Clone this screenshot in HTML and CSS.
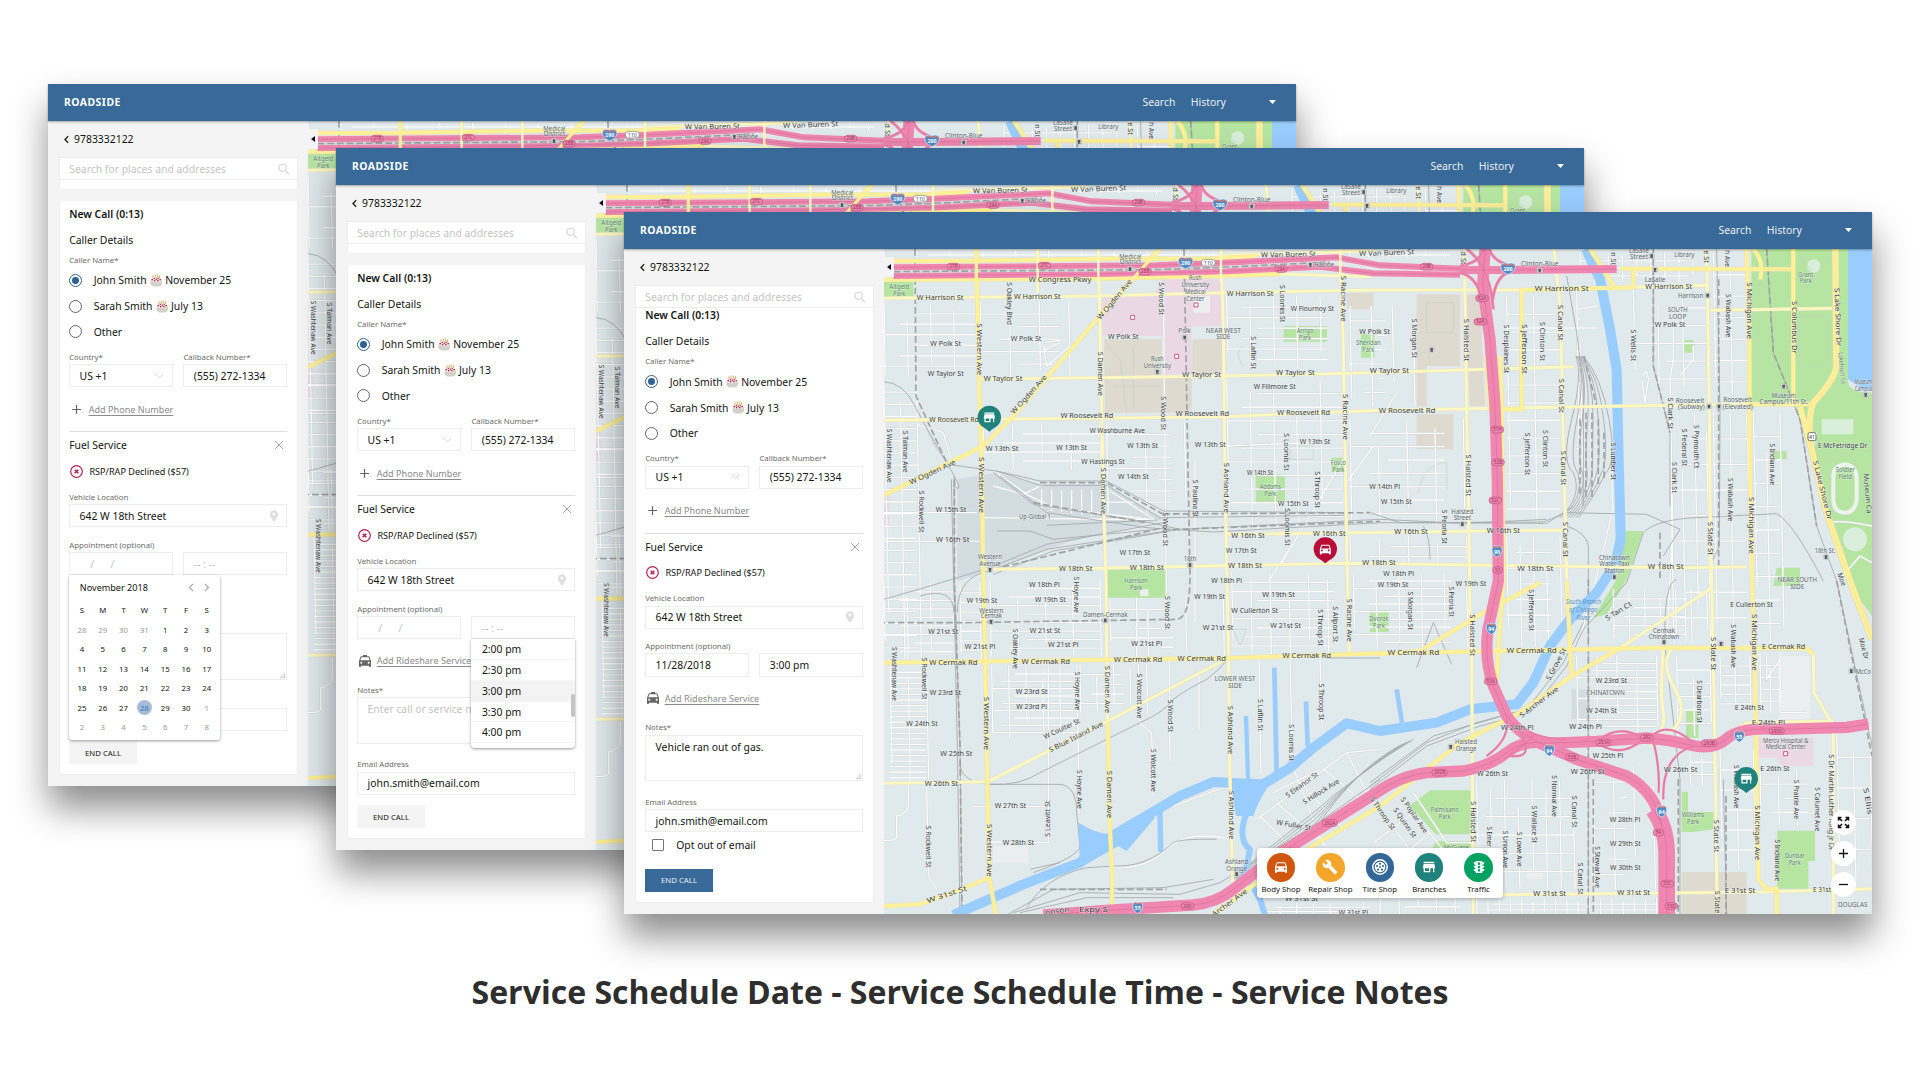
FILE: index.html
```html
<!DOCTYPE html>
<html lang="en">
<head>
<meta charset="utf-8">
<title>Roadside service scheduling</title>
<link rel="stylesheet" href="styles.css">
</head>
<body>
<main class="board">
  <section class="window window-date" data-state="date"></section>
  <section class="window window-time" data-state="time"></section>
  <section class="window window-notes" data-state="notes"></section>
</main>
<h1 class="caption">Service Schedule Date - Service Schedule Time - Service Notes</h1>
<script src="map.js"></script>
<script src="app.js"></script>
</body>
</html>
```
FILE: styles.css
```css
* { box-sizing: border-box; }
html, body { margin: 0; }
body { width: 1920px; height: 1080px; overflow: hidden; position: relative; background: #fff; font-family: "Noto Sans", "Open Sans", sans-serif; font-size: 10.4px; color: #151515; }
svg { display: block; }
.board { position: relative; width: 1920px; height: 960px; }
.window { position: absolute; width: 1248px; height: 702px; display: flex; flex-direction: column; background: #f4f4f4; box-shadow: 1px 22px 34px rgba(0,0,0,.45); }
.window-date { left: 48px; top: 84px; }
.window-time { left: 336px; top: 148px; }
.window-notes { left: 624px; top: 212px; }
.caption { margin: 0; padding-top: 7px; text-align: center; font: 700 32.05px/50px "Open Sans", sans-serif; color: #2e2e2e; }

.topbar { height: 36.5px; flex: none; display: flex; align-items: center; padding: 0 20px 0 16px; background: #396998; color: #fff; box-shadow: 0 1px 2px rgba(0,0,0,.35); position: relative; z-index: 2; }
.brand { font-weight: 700; letter-spacing: .5px; margin-right: auto; }
.topnav { display: flex; align-items: center; gap: 15.5px; color: #e9eff5; }
.topnav svg { margin-left: 27.7px; }
.content { flex: 1; display: flex; min-height: 0; }
.sidebar { width: 260px; padding: 9px 10.4px 0 10.6px; flex: none; display: flex; flex-direction: column; }
.back { display: flex; align-items: center; gap: 5.5px; height: 19px; padding-left: 5px; }
.search { height: 23px; margin-top: 8.5px; flex: none; border: 1px solid #ececec; background: #fff; display: flex; align-items: center; justify-content: space-between; padding: 0 6.5px 0 9.7px; color: #c4c4c4; }
.stub { height: 10px; background: #fff; border: 1px solid #efefef; border-top: 0; margin-bottom: 10.5px; flex: none; }
.card { background: #fff; border: 0 solid #efefef; border-width: 0 1px 1px; padding: 0 9.6px; height: 574.5px; }
.window-notes .card { height: 595px; }
.window-notes .card-title { height: 20px; line-height: 14px; }
.card-title { font-weight: 600; height: 26px; line-height: 27px; }
.section-title { height: 26px; line-height: 26px; display: flex; justify-content: space-between; align-items: center; padding-right: 3px; }
.label { display: block; height: 14.3px; line-height: 14px; font-size: 7.8px; color: #6b6b6b; white-space: nowrap; }
.label-name { height: 15px; }
.radio { display: flex; align-items: center; height: 25.7px; gap: 11.5px; }
.radio .dot { width: 13px; height: 13px; border-radius: 50%; border: 1.3px solid #666; display: grid; place-items: center; }
.radio .dot.on { border-color: #2f6396; }
.radio .dot.on::after { content: ""; width: 6.8px; height: 6.8px; border-radius: 50%; background: #2f6396; }
.radio .who { display: flex; align-items: center; gap: 3px; white-space: pre; }
.pair { display: grid; grid-template-columns: 1fr 1fr; column-gap: 10.6px; }
.pair.gap, .field.gap { margin-top: 5.3px; }
.field.wide { margin-top: 10.4px; }
.field.email { margin-top: 13.6px; }
.input { height: 23.2px; border: 1px solid #ededed; display: flex; align-items: center; justify-content: space-between; padding: 0 8px 0 9.4px; white-space: pre; background: #fff; }
.input .pin { margin-right: -3px; }
.muted { color: #c4c4c4; }
.action { display: flex; align-items: center; height: 43.8px; padding-left: 1px; gap: 5.5px; color: #8b8b8b; font-size: 9.1px; }
.action .taxi { margin: 0 -1.5px; }
.action span { text-decoration: underline; text-underline-offset: 1.5px; }
.rule { height: 1.3px; background: #dedede; }
.declined { display: flex; align-items: center; height: 26px; gap: 6.2px; padding-left: 1px; font-size: 9.1px; }
.notes { height: 46.5px; align-items: flex-start; padding: 4px 1px 1px 9.4px; }
.notes svg { align-self: flex-end; }
.optout { display: flex; align-items: center; gap: 12px; height: 26.2px; padding-left: 7px; }
.optout i { width: 12px; height: 12px; border: 1.3px solid #777; border-radius: 1px; }
.button { display: block; width: 67.5px; height: 22.8px; margin-top: 10.6px; border: 0; padding: 0; background: #f4f4f4; font: 7.8px/22px "Noto Sans", sans-serif; text-align: center; color: #151515; }
.button.primary { background: #396998; color: #e6edf4; }
.anchor { position: relative; }
.calendar { position: absolute; left: 0; top: 23.4px; width: 151px; height: 165px; background: #fff; border-radius: 3px; box-shadow: 0 1px 3px rgba(0,0,0,.4); z-index: 3; }
.cal-head { display: flex; align-items: center; justify-content: space-between; height: 25px; padding: 0 10px 0 10.6px; font-size: 9.1px; }
.cal-head svg { width: 22px; }
.cal-grid { display: grid; grid-template-columns: repeat(7, 20.8px); grid-auto-rows: 19.5px; padding-left: 2.4px; font-size: 7.8px; place-items: center; }
.cal-grid .off { color: #999; }
.cal-grid .picked { width: 15.6px; height: 15.6px; border-radius: 50%; background: #a5bdd8; color: #3279b9; display: grid; place-items: center; }
.times { position: absolute; left: 0; top: 23.4px; width: 104px; height: 109px; background: #fff; border-radius: 0 0 4px 4px; box-shadow: 0 1px 3px rgba(0,0,0,.4); z-index: 3; overflow: hidden; }
.times div { height: 20.8px; line-height: 20px; padding-left: 10.5px; border-bottom: 1px solid #f6f6f6; }
.times .hover { background: #f3f3f3; }
.times i { position: absolute; right: 0; top: 55px; width: 4px; height: 22.5px; border-radius: 2px; background: #c4c4c4; }

.map { flex: 1; position: relative; overflow: hidden; min-width: 0; }
.map > svg { width: 988px; height: 666px; font-family: "Noto Sans", sans-serif; }
.tab { position: absolute; left: 0; top: 8.5px; width: 10px; height: 20px; background: #f4f4f4; display: grid; place-items: center; }
.legend { position: absolute; left: 372.6px; bottom: 15.6px; height: 50.4px; width: 246.4px; background: #fff; border-radius: 4px; box-shadow: 0 1px 4px rgba(0,0,0,.3); display: flex; align-items: stretch; justify-content: center; }
.legend div { width: 49.4px; flex: none; display: flex; flex-direction: column; align-items: center; padding-top: 5px; font-size: 7.8px; line-height: 14px; white-space: nowrap; }
.legend b { width: 28.5px; height: 28.5px; border-radius: 50%; display: grid; place-items: center; }
.legend svg { fill: #fff; }
.body-shop { background: #d1570f; } .repair { background: #f3a62a; } .tire { background: #346798; } .branch { background: #1f827d; } .traffic { background: #04a262; }
.controls { position: absolute; right: 16.4px; bottom: 17px; display: flex; flex-direction: column; gap: 6px; }
.controls b { width: 25px; height: 25px; border-radius: 50%; background: #fff; display: grid; place-items: center; }

.land { fill: #e0e9ec; } .park { fill: #b6e5a2; } .lawn { fill: #d9eedb; } .beige { fill: #dedacf; } .hospital { fill: #ead9e5; } .rail-land { fill: #d3dde1; } .built { fill: #eceff0; }
.water { fill: #99ccff; } .river { fill: none; stroke: #99ccff; stroke-linejoin: round; }
.minor, .pale, .strong, .motor, .lane, .rail, .tie, .path { fill: none; stroke-linejoin: round; }
.minor-case { fill: none; stroke: #d0d6d8; stroke-width: 6.5; }
.minor { stroke: #fdfdfd; stroke-width: 4; }
.pale-case { fill: none; stroke: #dedccb; stroke-width: 11; }
.pale { stroke: #fdf8c0; stroke-width: 9; }
.strong-case { fill: none; stroke: #ebe2ae; stroke-width: 13.5; }
.strong { stroke: #fff199; stroke-width: 11; }
.motor { stroke: #ef87b0; } .lane { stroke: #d8709b; stroke-width: 2; }
.rail-bed { fill: none; stroke: #d6dadb; stroke-width: 8; }
.rail { stroke: #a5a9aa; stroke-width: 2.6; }
.tie { stroke: #9fa3a4; stroke-width: 5; stroke-dasharray: 20 9; }
.path { stroke: #c2d3c4; stroke-width: 2; }
.road-name { font-size: 21px; fill: #3c3f42; } .poi { font-size: 20px; fill: #5c676d; } .green-name { font-size: 20px; fill: #568459; } .water-name { font-size: 19px; fill: #5c93c4; font-style: italic; }
.road-name, .poi, .green-name { paint-order: stroke; stroke: rgba(238,243,244,.7); stroke-width: 2.5px; }
.exit { fill: #ee86ae; stroke: #b95480; stroke-width: 2; } .exit-name { font-size: 14px; fill: #9d315f; }
```
FILE: map.js
```js
// Street map of Chicago's near west side. Units are thirds of a pixel.
// Every road list is a set of SVG path strings grouped by road class.
const roads = {
  strong: [
    'M289 9L297 400 305 640 310 1005 316 1250 322 1605 328 1895 348 2007',
    'M838 9L655 215 400 510 310 600 12 748',
    'M12 1250L1045 1236 1500 1222 2350 1205 2780 1207 2800 1225',
    'M683 1430L690 1750 697 1900 695 1980',
    'M12 1980L120 1975 220 1940 328 1895',
    'M1925 485V132L2260 124V70',
    'M2600 9L2608 300 2610 700 2617 1000 2625 1300 2635 1900 2660 1930 2690 1928V2007',
    'M2740 9V470', 'M2220 68L2740 70', 'M2130 9L2200 118',
    'M1000 2007L1130 1910 1290 1805 1500 1680 1740 1490 1920 1400 2075 1290 2215 1210',
    'M2075 1290L2060 1005', 'M12 45L290 44 700 38 1000 38 1130 30', 'M12 101L650 98 1030 90 1200 84',
    'M1500 1225L1620 1215 1810 1100 1980 1010', 'M2600 475H2800', 'M1820 330L1830 490H1930',
    'M1860 330L1865 500 1870 980 1850 1300', 'M2640 100Q2655 50 2620 9'],
  pale: [
    'M655 9L663 400 672 800 678 1005 683 1430',
    'M1023 9L1030 250 1035 700 1045 1200 1050 1600 1058 1920',
    'M1381 9L1390 300 1400 900 1408 1220', 'M473 9V140',
    'M1753 9L1760 500 1767 850 1770 1100 1775 1240 1780 2007',
    'M2022 9L2042 200 2048 500 2060 1000', 'M2480 9L2488 500 2492 900 2495 1005 2503 1400 2512 2007',
    'M12 523L650 517 1030 512 1500 493 2230 480 2600 475',
    'M12 157L650 150 1030 140 1480 132 1925 132', 'M2260 124L2480 118',
    'M300 400L1030 390 1480 380 2080 362', 'M310 970L680 966 1400 952 2400 965 2600 962',
    'M1035 865L2060 852', 'M322 1608L683 1425 1045 1236', 'M12 1612L322 1607',
    'M1780 1947L2640 1938 2976 1928', 'M2490 193L2870 187', 'M1030 28L1480 14', 'M1200 84L1470 92',
    'M2215 1210L2490 1030', 'M2800 1225L2802 1340 2860 1440V2007', 'M2510 1490L2600 1430 2860 1425',
    'M2350 1210Q2340 1350 2350 1400T2310 1500', 'M2375 1210Q2340 1250 2385 1330T2370 1460']
};

// [left, top, right, bottom, columns, rows] of each residential area
const blocks = [
  [12,170,290,390,4,6],[300,165,655,390,4,5],[12,400,110,1240,2,22],[310,535,660,670,4,4],[680,530,1030,800,3,7],
  [1040,150,1390,370,5,6],[1040,400,1390,850,5,10],[1410,180,1600,480,3,6],[1410,520,1750,840,4,7],[12,1010,220,1240,3,8],
  [30,1260,140,1610,2,20],[240,1010,300,1240,1,7],[330,1000,660,1230,4,8],[690,1060,1030,1230,3,5],[1055,980,1400,1225,6,8],
  [335,1260,590,1480,5,9],[600,1255,800,1400,4,4],[1420,980,1760,1210,5,9],[1410,870,1760,960,4,2],[1880,150,2040,840,2,12],
  [2090,120,2100,800,1,6],[2260,130,2480,450,3,5],[2500,20,2600,470,2,6],[2500,500,2600,1190,2,8],[2370,500,2480,1190,3,8],
  [2620,500,2700,1200,2,9],[1880,870,2040,1200,4,6],[2090,1230,2330,1460,4,10],[2390,1230,2490,1470,2,5],[2520,1230,2610,1400,2,5],
  [1790,1600,2080,1930,7,5],[2140,1560,2320,1930,3,7],[2430,1510,2500,1620,2,2],[2520,1510,2620,1870,2,5],[2640,1570,2860,1740,4,3],
  [1500,1900,1780,2007,5,3],[1790,1955,2330,2007,16,2],[2100,20,2480,110,9,3],[1410,15,1750,35,6,1],[12,15,1000,35,10,1],
  [2640,1220,2700,1400,2,4],[2870,1440,2970,1900,2,4],[700,20,1370,30,5,1],[2200,1030,2480,1190,6,5],[1150,1970,1500,2007,7,2]
];
const extraMinor = [
  'M85 1612V1680Q85 1700 50 1710V1775Q40 1785 12 1783','M140 1612L145 1890 170 1930','M505 1260L505 1790 330 1788','M275 1682H505',
  'M590 1260L598 1700','M775 1255L780 1430 815 1460 820 1650','M868 1240L870 1545','M957 1270V1450','M1137 1240L1143 1585','M1230 1240L1238 1560 1330 1800',
  'M1320 1235L1325 1430','M852 1690L1030 1625 1060 1630 1100 1710','M700 1865Q800 1870 860 1810T1055 1780','M1130 1720L1400 1520 1500 1510','M1140 1710L1290 1860','M1190 1670L1340 1800',
  'M1260 1610L1400 1760','M1330 1570L1440 1660','M1400 1520L1460 1640','M1180 1640L1320 1570','M1500 1690L1640 1880','M1560 1650L1720 1850','M1480 1790L1600 1700','M1540 1850L1650 1760','M1600 1640L1700 1790H1780',
  'M12 800H290','M12 886H300','M110 535L190 560 215 650','M1030 600L1300 590','M1470 570L1550 440','M1400 710L1480 600','M1200 960L1390 640','M1170 1000L1260 860',
  'M490 290L560 280 M490 300L500 360 570 300 M480 280V320L540 290','M430 745L340 720 M430 745L490 715','M315 815L825 822 690 735','M350 680L440 745 520 785 825 822',
  'M485 730V790M515 732V795M545 732V798M575 732V802M605 732V806M635 732V810M850 105L860 1130M945 640V1130M770 1055V1240',
  'M2380 180V340L2370 400 2378 840 2360 1200','M2290 390Q2300 360 2305 400L2295 470 2285 400','M2205 480Q2190 750 2200 780 2150 1010 2090 1210','M2090 190L2150 180','M1870 246H2150',
  'M2800 600L2810 560M2700 1250V1400H2780','M2660 1230V1300L2700 1240','M2440 300V340L2400 390','M2850 830Q2880 820 2976 840','M2880 1000L2940 930 2976 950'
];
const rails = [
  'M12 407Q70 410 105 480T200 650 222 720','M222 690L223 1005 240 1500 246 2007','M214 700L232 1500 240 2007','M200 655L350 675 480 705 680 705 850 795 1400 800','M350 675L480 718 680 718 840 815 1400 808',
  'M340 680L460 775 800 828 900 850 1500 820 1750 832 2000 820','M360 690L500 800 800 845 1000 858 1500 830 2000 832 2080 780','M350 855H450L520 880 830 850','M12 1060L150 1020 330 965 500 895 850 830',
  'M330 975L500 910 860 855','M340 985L520 915 900 850','M500 838L830 822','M222 1100Q220 1020 120 1050','M232 1100Q232 990 330 975','M240 1560Q250 1610 330 1615H540Q590 1620 590 1700L600 1800Q600 1830 460 1880',
  'M330 1615Q420 1620 480 1580L780 1430Q850 1400 880 1360 920 1330 980 1300 1020 1270 1045 1238','M450 1870L540 1850','M380 2007L520 1930 850 1925 1000 1900M400 2000L600 1940 900 1945 1020 1910 1300 1740 1500 1600','M420 2000L620 1955 880 1955M440 1985Q500 1890 620 1865L700 1860Q800 1865 880 1790 900 1778 1010 1780',
  'M1470 1630L1640 1500 1800 1440 1950 1400 2060 1260 2110 1150 2240 1010','M1470 1620L1640 1490 1790 1430 1940 1390 2050 1250 2110 1130','M1470 1610L1660 1470 1900 1400','M1470 800L1560 830 1990 828 2060 800 2300 805 2400 850 2350 930','M2060 90L2090 260 2110 420 2110 780',
  'M2240 1010L2290 860Q2330 820 2450 815L2690 803Q2740 830 2830 1005','M2060 840Q2120 860 2125 900V2007','M2320 9V360L2370 560V780','M2660 9L2680 320 2760 520 2810 840 2870 1005 2976 1500',
  'M2390 1000Q2350 1010 2355 1200L2400 1600V2007','M2510 9L2520 500 2518 900 2490 960','M1630 840Q1650 870 1650 940','M2530 1600L2540 2007','M1340 1236H1500','M1610 1265L1660 1130 1715 1255'
];
for (let i = 0; i < 8; i++) rails.push(`M${2088+i*3} 330Q${2108+i*8} 390 ${2075+i*16} 520T${2080+i*14} 680Q${2110+i*5} 750 ${2040+i*8} 815`);
for (let i = 0; i < 5; i++) rails.push(`M${1600-i*9} ${1480+i*4}Q${1450-i*6} 1570 ${1300+i*3} ${1700+i*10}L${1050+i*6} 1900`);
const ties = ['M105 9L108 450 200 650','M223 700V1005L240 1500 246 2007','M912 9L930 990Q930 1118 890 1120L250 1130H12','M480 710H680L850 805','M850 804L1470 800','M850 852L1500 826','M340 970L860 842','M460 770L800 830','M480 1930H860','M2660 9L2680 320 2760 520 2810 840','M2125 1000V2007','M2140 1600V2007','M2320 9V360L2370 560','M2516 100V960','M2395 1600V2007','M2538 1650V2007','M2870 1005L2976 1530','M2340 860V1005','M2100 520V750','M2118 500V760','M2136 500V760','M2155 520V720','M2172 560V700','M2112 330L2150 480'];
const medianRail = ['M12 77L830 71 1050 63 1350 48'];
const motorways = [
  [18,'M40 64L830 58 1000 52 1370 34 1500 58 1740 68'],[18,'M40 90L650 84 1040 76 1320 62 1480 82 1740 86'],[24,'M1740 72L1830 72 2210 69'],
  [34,'M1815 9L1808 120 1830 280 1845 480 1852 700 1855 1005 1824 1150Q1812 1240 1840 1320L1880 1410Q1920 1470 2010 1505L2090 1540 2240 1590Q2330 1640 2345 1740'],[50,'M2320 1690Q2358 1740 2360 1820V2007'],
  [34,'M490 2007L700 1992 940 1977Q1010 1970 1060 1930L1200 1822 1490 1640Q1560 1590 1640 1580L1750 1575Q1830 1560 1880 1520T2000 1492L2150 1486 2300 1476Q2360 1480 2430 1497T2540 1478 2700 1450L2900 1444 2965 1434'],
  [9,'M1740 60Q1800 50 1812 9M1740 80Q1790 90 1806 160M1900 76Q1850 80 1838 160M1900 60Q1840 50 1828 9M1760 9Q1830 60 1840 190'],
  [7,'M1880 1420Q1890 1480 1820 1530M1900 1430Q1980 1540 1890 1530M1870 1540Q1930 1500 1960 1470M2150 1486Q2220 1430 2290 1478M2150 1490Q2220 1540 2290 1480M2310 1475Q2360 1420 2440 1490M2320 1485Q2340 1560 2336 1640M2440 1500Q2345 1530 2350 1660M1910 1430Q1960 1480 2060 1480']
];
const parks = ['M12 108H100V154H12z','M1211 240H1341V287H1211z','M1443 265H1483V335H1443z','M1127 683H1215V773H1127z','M678 970H858V1055H678z','M1355 635H1397V678H1355z','M1470 1093H1526V1158H1470z',
  'M1650 1633H1772V1765H1668L1588 1680z','M1668 1785H1772V1840H1640z','M2405 1637H2424V1698H2500V1750L2440 1758H2405z','M2692 1754H2805V1845H2785V1928H2692z','M2418 1395H2455V1475H2418z','M2408 282H2441V320H2408z',
  'M2614 9H2904V400Q2900 440 2976 440V1110L2900 1005 2840 820 2750 482 2614 466z','M2238 855H2290L2240 1000 2180 1105 2140 1115 2210 1000z','M2690 965H2760V1020H2680z','M2680 615H2720V640H2680z'];
const rivers = [
  [30,'M2118 9L2160 100 2190 250 2210 370 2215 600 2222 880 2205 955 2150 1040 2070 1120 2010 1200 1960 1310 1910 1375 1770 1390 1670 1430 1500 1455 1400 1432 1300 1505 1230 1565 1150 1615 1070 1612 1000 1608 900 1650 700 1768 600 1850 430 1915 220 2007'],
  [14,'M1183 1265L1190 1590'],[13,'M1098 1410L1104 1600'],[14,'M1278 1366L1283 1500'],[14,'M1550 1330L1566 1430'],[18,'M1100 1700Q1070 1780 1110 1810L1095 1880 1140 1960 1155 2007'],[16,'M840 1690L842 1818']
];
const waters = ['M2904 9H2976V430H2950L2904 400z','M1050 1600L1180 1600Q1140 1650 1120 1710H1068z','M596 1730Q640 1760 690 1765L780 1715H825L740 1815 715 1800 600 1865z'];

// text | x | y | length | rotation
const names = {
 'road-name': `W Van Buren St|1225|25|165|-1;W Van Buren St|1520|20|165|-2;W Congress Pkwy|540|100|188;W Harrison St|180|155|140;W Harrison St|472|150|140;W Harrison St|1110|141|140;W Harrison St|2045|128|162;W Harrison St|2366|122|140;W Flournoy St|1297|187|130
W Polk St|197|291|92;W Polk St|438|278|92;W Polk St|730|272|92;W Polk St|1484|257|92;W Polk St|2370|236|92;W Taylor St|197|382|108;W Taylor St|369|398|116;W Taylor St|965|386|116;W Taylor St|1246|380|116;W Taylor St|1528|374|118
W Fillmore St|1184|421|126;W Roosevelt Rd|222|520|148;W Roosevelt Rd|621|508|158;W Roosevelt Rd|967|503|160;W Roosevelt Rd|1271|498|158;W Roosevelt Rd|1581|492|170;W Washburne Ave|712|554|166
W 13th St|366|606|98;W 13th St|575|603|92;W 13th St|788|599|92;W 13th St|991|594|92;W 13th St|1305|587|92;W Hastings St|669|646|130;W 14th St|760|690|92;W 14th St|1140|680|78;W 14th Pl|1514|720|92;W 15th St|213|791|92;W 15th St|1240|771|92;W 15th St|1549|766|92
W 16th St|218|881|100;W 16th St|1104|867|100;W 16th St|1348|862|98;W 16th St|1593|857|100;W 16th St|1870|852|100;W 17th St|765|918|92;W 17th St|1084|912|92;W 18th St|587|967|100;W 18th St|800|963|102;W 18th St|1095|958|102;W 18th St|1497|950|100;W 18th St|1966|968|108;W 18th St|2357|962|108
W 18th Pl|493|1014|92;W 18th Pl|1040|1003|92;W 18th Pl|1556|982|92;W 19th St|306|1064|92;W 19th St|511|1059|92;W 19th St|989|1051|92;W 19th St|1196|1046|98;W 19th St|1539|1016|92;W 19th St|1773|1011|92;W Cullerton St|1124|1093|140;E Cullerton St|2615|1074|128
W 21st St|190|1155|90;W 21st St|495|1152|92;W 21st St|1014|1143|92;W 21st St|1217|1137|92;W 21st Pl|300|1201|92;W 21st Pl|550|1196|92;W 21st Pl|800|1192|92;W Cermak Rd|220|1250|145;W Cermak Rd|497|1246|145;W Cermak Rd|774|1239|145;W Cermak Rd|965|1236|145;W Cermak Rd|1280|1227|145;W Cermak Rd|1600|1220|155;W Cermak Rd|1955|1213|150;E Cermak Rd|2711|1201|130
W 23rd St|196|1340|94;W 23rd St|455|1335|96;W 23rd Pl|455|1382|92;W 23rd St|2194|1302|94;W 24th St|126|1432|94;W 24th St|2165|1393|92;W 24th Pl|1912|1443|98;W 24th Pl|2117|1440|98;E 24th St|2608|1385|88;E 24th Pl|2665|1429|100;W 25th St|229|1522|96;W 25th Pl|2184|1529|92;W 26th St|184|1612|100;W 26th St|1838|1582|92;W 26th St|2123|1577|102;W 26th St|2402|1571|100;E 26th St|2685|1566|88
W 27th St|391|1678|94;W 28th St|415|1788|94;W 28th Pl|2235|1719|92;W 29th St|2236|1792|92;W 30th St|2236|1865|92;W 31st St|1265|1958|98;W 31st St|2009|1943|98;W 31st St|2261|1940|98;E 31st St|2580|1934|92;E 31st|2826|1930|54;W 31st Pl|1420|1998|88;Expy S|640|1989|86;onson|532|1994|74|-8;W 31st St|200|1945|125|-18
W Ogden Ave|703|160|150|-50;W Ogden Ave|446|445|150|-48;W Ogden Ave|157|678|150|-25;W Coulter St|545|1448|118|-25;S Blue Island Ave|588|1472|180|-27;S Eleanor St|1265|1616|115|-36;S Hillock Ave|1323|1636|125|-32;W Fuller St|1241|1737|105|10;Archer Ave|1048|1970|125|-36;S Archer Ave|1977|1368|140|-37;S Tan Ct|2215|1095|88|-32;S Grove St|2028|1254|105|-62;S Poplar Ave|1603|1707|125|55;S Throop St|1508|1702|115|55;S Quinn St|1575|1730|105|55
S Oakley Blvd|387|173|128|90;S Western Ave|297|310|155|90;S Western Ave|304|717|168|90;S Western Ave|318|1432|160|90;S Western Ave|328|1813|158|90;S Damen Ave|661|383|132|90;S Damen Ave|670|735|140|90;S Damen Ave|683|1330|142|90;S Damen Ave|688|1645|142|90;S Wood St|843|158|98|90;S Wood St|851|502|102|90;S Wood St|857|850|102|90;S Wood St|863|1100|100|90;S Wood St|870|1410|98|90
S Ashland Ave|1038|725|150|90;S Ashland Ave|1050|1452|145|90;S Ashland Ave|1054|1707|146|90;S Paulina St|946|757|112|90;S Loomis St|1208|173|112|90;S Loomis St|1218|618|112|90;S Loomis St|1222|843|112|90;S Loomis St|1235|1490|110|90;S Laflin St|1120|320|98|90;S Laflin St|1142|1407|96|90;S Racine Ave|1390|158|138|90;S Racine Ave|1396|513|138|90;S Racine Ave|1408|1123|130|90;S Throop St|1311|731|110|90;S Throop St|1320|1145|110|90;S Throop St|1325|1368|110|90;S Allport St|1366|1135|108|90
S Washtenaw Ave|28|629|162|90;S Washtenaw Ave|43|1284|162|90;S Talman Ave|76|617|125|90;S Rockwell St|125|797|125|90;S Rockwell St|134|1298|125|90;S Rockwell St|146|1802|125|90;S Oakley Ave|407|1208|120|90;S Hoyne Ave|588|1046|108|90;S Hoyne Ave|593|1335|116|90;S Hoyne Ave|599|1630|116|90;S Wolcott Ave|777|1350|135|90;S Wolcott Ave|820|1573|128|90;S Leavitt St|501|1718|108|-90
S Morgan St|1602|277|118|90;S Morgan St|1591|1094|115|90;S Halsted St|1760|282|128|90;S Halsted St|1764|688|125|90;S Halsted St|1776|1167|125|90;S Halsted St|1780|1727|123|90;S Desplaines St|1878|309|145|90;S Jefferson St|1932|309|148|90;S Jefferson St|1943|624|128|90;S Jefferson St|1953|1092|125|90;S Clinton St|1987|286|118|90;S Clinton St|1996|608|112|90;S Canal St|2041|230|108|90;S Canal St|2045|449|102|90;S Canal St|2050|666|104|90;S Canal St|2056|880|106|90;S Canal St|2083|1697|95|90;S Canal St|2102|1898|95|90
S Lumber St|2201|646|112|90;S Wells St|2260|298|95|90;S Clark St|2371|502|95|90;S Clark St|2382|694|92|90;S Federal St|2414|604|112|90;S Plymouth Ct|2450|602|130|90;S Wabash Ave|2544|209|130|90;S Wabash Ave|2552|761|130|90;S Wabash Ave|2561|1200|130|90;S Wabash Ave|2568|1622|130|90;S Michigan Ave|2607|194|170|90;S Michigan Ave|2615|838|170|90;S Michigan Ave|2622|1189|170|90;S Michigan Ave|2631|1760|165|90;S Indiana Ave|2677|655|125|90;S Indiana Ave|2693|1843|125|90;S State St|2490|877|100|90;S State St|2500|1223|100|90;S State St|2510|1770|98|90;S State|2513|1968|68|90
S Columbus Dr|2742|244|158|90;S Lake Shore Dr|2874|213|175|88;S Lake Shore Dr|2828|732|182|76;S Peoria St|1692|842|102|90;S Peoria St|1714|1067|90|90;S Normal Ave|2024|1650|125|90;S Wallace St|1964|1735|112|90;S Lowe Ave|1919|1810|104|90;S Union Ave|1875|1810|112|90;S Emer|1829|1772|60|90;S Stewart Ave|2153|1863|125|90;S Dearborn St|2459|1367|128|90;S Prairie Ave|2750|1660|118|90;S Calumet Ave|2812|1690|132|90;S Dr Martin Luther King Jr Dr|2854|1670|290|90;S Ellis|2964|1665|80|80;Moe Dr|2952|1208|65|75;Moe|2886|1000|40|70;Museum Ca|2963|742|120|85
E McFetridge Dr|2888|597|148;e St|2479|32|38|90;h Ave|2541|38|50|90;d St|1750|36|40|90;n St|2200|38|38|90`,
 poi: `Medical|751|30|66;District|751|47|64;Racine|1333|56|58;Rush|946|95|38;University|946|116|82;Medical|946|136|62;Center|946|157|54;Polk|914|253|38;NEAR WEST|1030|252|105;SIDE|1030|272|42;Rush|832|336|38;University|832|357|82;18th|930|936|38;Western|330|931|72;Avenue|330|951|64;Up-Global 1|465|812|95;Western|334|1092|72;Cermak|334|1109|64;Damen-Cermak|676|1106|134;LOWER WEST|1065|1298|122;SIDE|1065|1318|42;Ashland|1070|1847|70;Orange|1070|1866|62
Clinton-Blue|1979|52|112;Street|2277|31|54;LaSalle|2277|14|60;Library|2413|26|60;LaSalle|2325|99|62;Harrison|2432|148|76;SOUTH|2393|191|60;LOOP|2393|212|52;Roosevelt|2430|462|86;(Subway)|2434|481|80;Roosevelt|2573|461|86;(Elevated)|2573|480|90;Museum|2711|448|72;Campus/11th St.|2711|467|145;Museum|2950|407|52;Campus|2950|426|52;Halsted|1747|795|66;Street|1747|814|52;Chinatown|2203|934|92;Water Taxi|2203|953|90;Station|2203|972|60;18th St.|2835|914|62;NEAR SOUTH|2752|1001|118;SIDE|2752|1021|42;Cermak|2352|1152|66;Chinatown|2352|1171|92;McCo|2950|1276|46;CHINATOWN|2177|1340|115;Halsted|1758|1487|66;Orange|1758|1507|62;Mercy Hospital &|2717|1482|136;Medical Center|2717|1502|120;DOUGLAS|2918|1974|88`,
 'green-name': `Altgeld|58|122|60;Park|58|142|36;Arrigo|1275|253|50;Park|1275|273|36;Sheridan|1465|290|74;Park|1465|310|36;Fosco|1375|649|46;Park|1375|669|36;Addams|1171|720|64;Park|1171|741|36;Harrison|768|1003|70;Park|768|1023|36;Dvorak|1497|1118|58;Park|1497|1138|36;Palmisano|1694|1690|84;Park|1694|1710|36;McGuane|1729|1804|74;Williams|2439|1704|68;Park|2439|1725|36;Dunbar|2744|1827|60;Park|2744|1848|36;Grant|2777|84|46;Park|2777|104|36;Soldier|2896|669|58;Field|2896|690|40;Lakefront Trl|2886|366|95|85`,
 'water-name': `South Branch|2110|1066|106;of Chicago|2110|1091|86;River|2110|1113|42`
};
const exits = '27B 220 62;27C 493 59;28B 795 77;29A 1203 69;29B 1640 62;52A 1806 157;52A 1801 227;51H 1852 551;52B 1854 649;52C 1846 763;53 1853 972;53A 1832 1306;292A 1349 1731;290 922 1980;292B 1679 1580;293A 2171 1490;292 2300 1475;293B 2488 1491;293D 2690 1455;53B 2076 1533;54 2335 1760;53C 2362 1913;53D 2374 1980';
const shields = '290 917 50;290 1884 67;90 1851 915;94 1834 1147;94 2008 1512;55 2578 1470;94 2345 1695;55 773 1984';
const stations = [[750,69],[1291,56],[914,274],[832,377],[930,957],[330,971],[333,1127],[676,1123],[1070,1884],[1979,73],[2315,30],[2325,71],[2483,148],[2487,481],[2517,481],[2711,421],[1747,834],[2203,993],[2352,1188],[2523,1193],[1712,1502],[2838,933],[2914,1275],[1655,311],[2957,446]];

function blockPaths() {
  const out = [];
  blocks.forEach(([l, t, r, b, c, n], k) => {
    for (let i = 0; i <= c; i++) {
      const x = l + (r - l) * i / c, cut = ((i * 7 + k * 3) % 4) * (b - t) / 12;
      out.push(`M${x} ${t + (i % 2 ? cut : 0)}L${x + (b - t) / 60} ${b - (i % 2 ? 0 : cut)}`);
    }
    for (let j = 1; j <= n; j++) {
      const y = t + (b - t) * j / (n + 1), w = (r - l) / c, a = (j * 5 + k) % 3, z = (j * 3 + k * 2) % 3;
      out.push(`M${l + (c > 2 ? a * w / 1.5 : 0)} ${y + 2}H${r - (c > 2 ? z * w / 1.5 : 0)}`);
    }
  });
  return out;
}

const pinIcon = {
  store: 'M20 4H4v2h16V4zm1 10v-2l-1-5H4l-1 5v2h1v6h10v-6h4v6h2v-6h1zm-9 4H6v-4h6v4z',
  car: 'M18.92 6.01C18.72 5.42 18.16 5 17.5 5h-11c-.66 0-1.21.42-1.42 1.01L3 12v8c0 .55.45 1 1 1h1c.55 0 1-.45 1-1v-1h12v1c0 .55.45 1 1 1h1c.55 0 1-.45 1-1v-8l-2.08-5.99zM6.5 16c-.83 0-1.5-.67-1.5-1.5S5.67 13 6.5 13s1.5.67 1.5 1.5S7.33 16 6.5 16zm11 0c-.83 0-1.5-.67-1.5-1.5s.67-1.5 1.5-1.5 1.5.67 1.5 1.5-.67 1.5-1.5 1.5zM5 11l1.5-4.5h11L19 11H5z'
};
function pin(x, y, color, icon) {
  return `<path fill="${color}" d="M${x - 20} ${y + 27}L${x} ${y + 43}L${x + 20} ${y + 27}z"/><circle cx="${x}" cy="${y}" r="35" fill="${color}"/><path fill="#fff" transform="translate(${x - 22} ${y - 22}) scale(1.83)" d="${pinIcon[icon]}"/>`;
}

// edgeOnly keeps just the labels along the top and left edges, for windows lying behind others
function drawMap(edgeOnly) {
  const paths = (list, cls) => `<path class="${cls}" d="${list.join('')}"/>`;
  const minor = blockPaths().concat(extraMinor);
  let s = '<svg viewBox="12 9 2964 1998" preserveAspectRatio="none"><path class="land" d="M0 0H3000V2100H0z"/>';
  s += '<path class="hospital" d="M667 150H820L850 100H1030V240H935V385H850V270H667zM12 745H28V840H12zM2636 1475H2800V1560H2705L2690 1535H2636z"/>';
  s += '<path class="beige" d="M672 280H845V390H935V500H675zM937 280H1030V385H937zM1610 145H1740V360H1640V480H1610zM1755 145H1800L1815 480H1770zM1610 505H1720V610H1610zM2405 1878H2600V2007H2405zM1400 140H1480V190H1400z"/>';
  s += '<path class="rail-land" d="M232 700L350 680 470 715 680 715 850 820 560 890 330 975 232 1005zM130 530L200 650 160 600zM2075 1330H2130V1420H2075z"/>';
  s += paths(parks, 'park');
  s += '<circle class="lawn" cx="2801" cy="60" r="20"/><path class="lawn" d="M2825 520H2920V565H2825z"/><circle class="lawn" cx="2925" cy="880" r="36"/>';
  s += '<path class="built" d="M340 1800H445V1850H340zM940 150H990V200H940zM2695 1230H2790V1420H2695zM1940 1870H1990V1900H1940zM780 1030H805V1050H780z"/>';
  s += '<path class="path" d="M680 300L720 340 740 500M700 420H840M760 300V490M2640 30V440M2680 200V440H2720M2760 210H2840V360H2760zM2760 30L2850 150M2850 30L2760 150M1140 700Q1170 680 1200 700V750Q1170 780 1140 750zM1090 300Q1060 320 1090 360M1640 170H1720V260H1640zM1610 330Q1650 300 1650 350M1615 740Q1630 650 1700 650V730M2850 620Q2930 600 2930 700V790Q2890 830 2850 780zM1230 600H1300V640H1230zM1080 1200L1060 1150 1100 1150z"/>';
  s += '<path fill="none" stroke="#edf3ee" stroke-width="12" d="M2860 690Q2860 660 2896 655 2930 660 2930 700V760Q2925 800 2896 800 2860 800 2860 760z"/>';
  s += paths(minor, 'minor-case') + paths(minor, 'minor') + paths(rails, 'rail') + paths(ties, 'tie');
  s += rivers.map(r => `<path class="river" stroke-width="${r[0]}" d="${r[1]}"/>`).join('') + paths(waters, 'water');
  s += paths(roads.pale, 'pale-case') + paths(roads.pale, 'pale') + paths(roads.strong, 'strong-case') + paths(roads.strong, 'strong');
  const drive = 'M2866 9L2869 360Q2865 400 2800 470 2785 500 2790 590L2840 800 2910 1005 2976 1180';
  s += `<path fill="none" stroke="#e3dcb4" stroke-width="21" d="${drive}"/><path fill="none" stroke="#fff199" stroke-width="17" d="${drive}M2760 482L2790 590"/><path fill="none" stroke="#e9dc92" stroke-width="1.5" d="${drive}M2640 70H2740"/>`;
  s += motorways.map(m => `<path class="motor" stroke-width="${m[0]}" d="${m[1]}"/>`).join('') + motorways.map(m => `<path class="lane" d="${m[1]}"/>`).join('');
  s += paths(medianRail, 'rail-bed') + paths(medianRail, 'tie');
  s += '<path fill="none" stroke="#fdf8c0" stroke-width="7" d="M473 9V95M655 9V110M1023 9V110M1381 9V110"/><path fill="none" stroke="#fff199" stroke-width="10" d="M289 9V120M838 9L740 120"/>';
  stations.filter(p => !edgeOnly || p[1] < 110).forEach(([x, y]) => { s += `<rect x="${x-8}" y="${y-8}" width="16" height="16" rx="3" fill="#d5d8da" stroke="#a8adb0"/><path fill="#55595c" d="M${x-4} ${y-5}h8v7h-8zM${x-5} ${y+6}l3-4h4l3 4z"/>`; });
  s += '<path fill="#fff" stroke="#c4578a" stroke-width="3" d="M942 171h12v12h-12zM752 208h12v12h-12zM884 325h12v12h-12zM2711 1517h12v12h-12z"/>';
  exits.split(';').forEach(e => { const [t, x, y] = e.split(' '); if (edgeOnly && y > 110) return; s += `<rect class="exit" x="${x - 7 - t.length * 4}" y="${y - 10}" width="${14 + t.length * 8}" height="20" rx="10"/><text class="exit-name" text-anchor="middle" x="${x}" y="${+y + 5}">${t}</text>`; });
  shields.split(';').forEach(e => { const [t, x, y] = e.split(' '); if (edgeOnly && y > 110) return; const w = t.length > 2 ? 21 : 14; s += `<path transform="translate(${x} ${y})" fill="#4f8cc9" stroke="#eef3f7" stroke-width="2" d="M${-w} -12Q${-w/2} -19 0 -14 ${w/2} -19 ${w} -12 ${w + 6} 8 0 19 ${-w - 6} 8 ${-w} -12z"/><path stroke="#cf7d78" stroke-width="4" d="M${x - w + 3} ${y - 11}h${2 * w - 6}"/><text font-size="16" font-weight="700" fill="#fff" text-anchor="middle" x="${x}" y="${+y + 8}">${t}</text>`; });
  s += '<rect x="964" y="40" width="42" height="20" rx="10" fill="#fff" stroke="#777" stroke-width="2"/><text font-size="15" fill="#444" text-anchor="middle" x="985" y="56">110</text>';
  if (!edgeOnly) s += '<rect x="2784" y="560" width="24" height="24" rx="5" fill="#fff" stroke="#555" stroke-width="2.5"/><text font-size="16" fill="#333" text-anchor="middle" x="2796" y="578">41</text>';
  for (const cls in names) names[cls].split(/[;\n]/).forEach(row => {
    const [t, x, y, len, rot] = row.split('|');
    if (edgeOnly && +y > 110 && +x > 90) return;
    s += `<text class="${cls}" text-anchor="middle" dominant-baseline="central" textLength="${len}" lengthAdjust="spacingAndGlyphs" transform="translate(${x} ${y})${rot ? ` rotate(${rot})` : ''}">${t.replace('&', '&amp;')}</text>`;
  });
  if (!edgeOnly) s += pin(328, 514, '#1f827d', 'store') + pin(1336, 909, '#b80d37', 'car') + pin(2599, 1598, '#1f827d', 'store');
  return s + '</svg>';
}
```
FILE: app.js
```js
const icon = (d, size, fill, cls) => `<svg class="${cls || ''}" width="${size}" height="${size}" viewBox="0 0 24 24" fill="${fill || 'currentColor'}"><path d="${d}"/></svg>`;
const line = (w, h, d, color, sw) => `<svg width="${w}" height="${h}" viewBox="0 0 ${w} ${h}" fill="none" stroke="${color}" stroke-width="${sw}"><path d="${d}"/></svg>`;
const cake = '<svg width="12.500" height="13" viewBox="0 0 12 12.500"><path d="M2.800 1.200v4M5 .5v4M7 .5v4M9.200 1.200v4" stroke="#c8a24e" stroke-width=".8"/><path d="M.5 5.500Q6 2 11.500 5.500V9.500Q10.500 12 6 12T.5 9.500z" fill="#d3cfcb"/><path d="M.5 6.500Q6 9.500 11.500 6.500V5.500Q10 3.300 6 3.300T.5 5.500z" fill="#eee2de"/><path d="M1.500 5.400h1.300M3.800 6.300h1.300M6.900 6.300h1.300M9.200 5.400h1.300M3.600 4.300h1M7.400 4.300h1M5.500 5h1" stroke="#a81f42" stroke-width="1.300"/></svg>';
const taxi = 'M18.920 6.010C18.720 5.420 18.160 5 17.500 5H15V3H9v2H6.500c-.66 0-1.210.42-1.420 1.010L3 12v8c0 .55.45 1 1 1h1c.55 0 1-.45 1-1v-1h12v1c0 .55.45 1 1 1h1c.55 0 1-.45 1-1v-8l-2.080-5.990zM6.500 16c-.83 0-1.500-.67-1.500-1.500S5.670 13 6.500 13s1.500.67 1.500 1.500S7.330 16 6.500 16zm11 0c-.83 0-1.500-.67-1.500-1.500s.67-1.500 1.500-1.500 1.500.67 1.500 1.500-.67 1.500-1.500 1.500zM5 11l1.500-4.500h11L19 11H5z';
const place = 'M12 2C8.130 2 5 5.130 5 9c0 5.250 7 13 7 13s7-7.750 7-13c0-3.870-3.130-7-7-7zm0 9.500c-1.380 0-2.500-1.120-2.500-2.500s1.120-2.500 2.500-2.500 2.500 1.120 2.500 2.500-1.120 2.500-2.500 2.500z';
const wrench = 'M22.700 19l-9.100-9.100c.9-2.300.4-5-1.500-6.900-2-2-5-2.400-7.400-1.300L9 6 6 9 1.600 4.700C.4 7.100.9 10.100 2.900 12.100c1.900 1.900 4.600 2.400 6.900 1.500l9.100 9.100c.4.4 1 .4 1.400 0l2.300-2.300c.5-.4.5-1.100.1-1.400z';
const signal = 'M20 10h-3V8.860c1.720-.45 3-2 3-3.860h-3V4c0-.55-.45-1-1-1H8c-.55 0-1 .45-1 1v1H4c0 1.860 1.280 3.410 3 3.860V10H4c0 1.860 1.280 3.410 3 3.860V15H4c0 1.860 1.280 3.410 3 3.860V20c0 .55.45 1 1 1h8c.55 0 1-.45 1-1v-1.140c1.720-.45 3-2 3-3.860h-3v-1.140c1.720-.45 3-2 3-3.860zm-8 9a2 2 0 1 1 0-4 2 2 0 0 1 0 4zm0-5a2 2 0 1 1 0-4 2 2 0 0 1 0 4zm0-5a2 2 0 1 1 0-4 2 2 0 0 1 0 4z';
const wheel = '<svg width="18" height="18" viewBox="0 0 18 18"><circle cx="9" cy="9" r="7.200" fill="none" stroke="#fff" stroke-width="1.500"/><circle cx="9" cy="9" r="5.300" fill="#fff"/><g fill="#346798"><circle cx="9" cy="9" r=".9"/><circle cx="9" cy="5.800" r="1.100"/><circle cx="12" cy="8" r="1.100"/><circle cx="10.900" cy="11.600" r="1.100"/><circle cx="7.100" cy="11.600" r="1.100"/><circle cx="6" cy="8" r="1.100"/></g></svg>';

function calendar() {
  const days = [28, 29, 30, 31, ...Array.from({ length: 30 }, (_, i) => i + 1), 1, 2, 3, 4, 5, 6, 7, 8];
  const head = [...'SMTWTFS'].map(d => `<span>${d}</span>`).join('');
  const cells = days.map((d, i) => `<span class="${i < 4 || i > 33 ? 'off' : i === 31 ? 'picked' : ''}">${d}</span>`).join('');
  return `<div class="calendar"><div class="cal-head">November 2018${line(22, 9, 'M5 1L1.500 4.500 5 8M17 1l3.500 3.500L17 8', '#aaa', 1.2)}</div><div class="cal-grid">${head}${cells}</div></div>`;
}
const times = () => `<div class="times">${['2:00 pm', '2:30 pm', '3:00 pm', '3:30 pm', '4:00 pm'].map((t, i) => `<div class="${i === 2 ? 'hover' : ''}">${t}</div>`).join('')}<i></i></div>`;

function sidebar(state) {
  const done = state === 'notes', picking = state === 'date';
  return `<aside class="sidebar">
  <div class="back">${line(5, 9, 'M4.200 1.200L1 4.500l3.200 3.300', '#222', 1.4)}<span>9783332122</span></div>
  <div class="search"><span>Search for places and addresses</span><svg width="12" height="12" viewBox="0 0 12 12" fill="none" stroke="#d0d0d0" stroke-width="1"><circle cx="4.700" cy="4.700" r="3.700"/><path d="M7.400 7.400l4 4"/></svg></div>
  ${done ? '' : '<div class="stub"></div>'}
  <div class="card">
    <div class="card-title">New Call (0:13)</div>
    <div class="section-title">Caller Details</div>
    <span class="label label-name">Caller Name*</span>
    <div class="radio"><i class="dot on"></i><span class="who">John Smith${cake}November 25</span></div>
    <div class="radio"><i class="dot"></i><span class="who">Sarah Smith${cake}July 13</span></div>
    <div class="radio"><i class="dot"></i><span class="who">Other</span></div>
    <div class="pair gap">
      <div><span class="label">Country*</span><div class="input">US +1${line(9, 6, 'M1 1l3.500 3.500L8 1', '#d4d4d4', 1)}</div></div>
      <div><span class="label">Callback Number*</span><div class="input">(555) 272-1334</div></div>
    </div>
    <div class="action">${line(13, 13, 'M6.500 2v9M2 6.500h9', '#666', 1.2)}<span>Add Phone Number</span></div>
    <div class="rule"></div>
    <div class="section-title">Fuel Service${line(10, 10, 'M1 1l8 8M9 1L1 9', '#aaa', 1)}</div>
    <div class="declined"><svg width="13" height="13" viewBox="0 0 13 13" fill="none" stroke="#b5214c"><circle cx="6.500" cy="6.500" r="5.800" stroke-width="1.200"/><path d="M4.700 4.700l3.600 3.600M8.300 4.700L4.700 8.300" stroke-width="1.500"/></svg>RSP/RAP Declined ($57)</div>
    <div class="field gap"><span class="label">Vehicle Location</span><div class="input">642 W 18th Street${icon(place, 14, '#dfdfdf', 'pin')}</div></div>
    <div class="field wide"><span class="label">Appointment (optional)</span>
      <div class="pair">
        <div class="anchor"><div class="input ${done ? '' : 'muted'}">${done ? '11/28/2018' : '    /      /'}</div>${picking ? calendar() : ''}</div>
        <div class="anchor"><div class="input ${done ? '' : 'muted'}">${done ? '3:00 pm' : '-- : --'}</div>${state === 'time' ? times() : ''}</div>
      </div>
    </div>
    <div class="action">${picking ? '' : icon(taxi, 16, '#666', 'taxi') + '<span>Add Rideshare Service</span>'}</div>
    <div class="field"><span class="label">${picking ? '' : 'Notes*'}</span><div class="input notes ${done ? '' : 'muted'}">${done ? 'Vehicle ran out of gas.' : picking ? '<span></span>' : 'Enter call or service n'}${line(5, 5, 'M4.500 0v4.500H0zM4.500 2v2.500H2z', '#cfcfcf', .8)}</div></div>
    <div class="field email"><span class="label">${picking ? '' : 'Email Address'}</span><div class="input">${picking ? '' : 'john.smith@email.com'}</div></div>
    ${done ? '<div class="optout"><i></i>Opt out of email</div>' : ''}
    <button class="button ${done ? 'primary' : ''}">END CALL</button>
  </div></aside>`;
}

function mapOverlays() {
  const items = [['body-shop', 'Body Shop', icon(pinIcon.car, 16)], ['repair', 'Repair Shop', icon(wrench, 16)], ['tire', 'Tire Shop', wheel], ['branch', 'Branches', icon(pinIcon.store, 16)], ['traffic', 'Traffic', icon(signal, 16)]];
  return `<div class="legend">${items.map(([c, t, i]) => `<div><b class="${c}">${i.replace('currentColor', '#fff')}</b>${t}</div>`).join('')}</div>
  <div class="controls"><b>${line(13, 13, 'M1.500 4.500v-3h3M1.500 1.500L5 5M8.500 1.500h3v3M11.500 1.500L8 5M1.500 8.500v3h3M1.500 11.500L5 8M8.500 11.500h3v-3M11.500 11.500L8 8', '#111', 1.5)}</b><b>${line(11, 11, 'M5.500 1v9M1 5.500h9', '#111', 1.3)}</b><b>${line(11, 11, 'M1 5.500h9', '#111', 1.3)}</b></div>`;
}

document.querySelectorAll('.window').forEach(win => {
  const state = win.dataset.state, front = state === 'notes';
  win.innerHTML = `<header class="topbar"><span class="brand">ROADSIDE</span><nav class="topnav"><span>Search</span><span>History</span><svg width="7" height="4" viewBox="0 0 7 4" fill="#fff"><path d="M0 0h7L3.500 4z"/></svg></nav></header>
  <div class="content">${sidebar(state)}<div class="map">${drawMap(!front)}<div class="tab"><svg width="4" height="6" viewBox="0 0 4 6"><path d="M4 0v6L0 3z" fill="#111"/></svg></div>${front ? mapOverlays() : ''}</div></div>`;
});
```
